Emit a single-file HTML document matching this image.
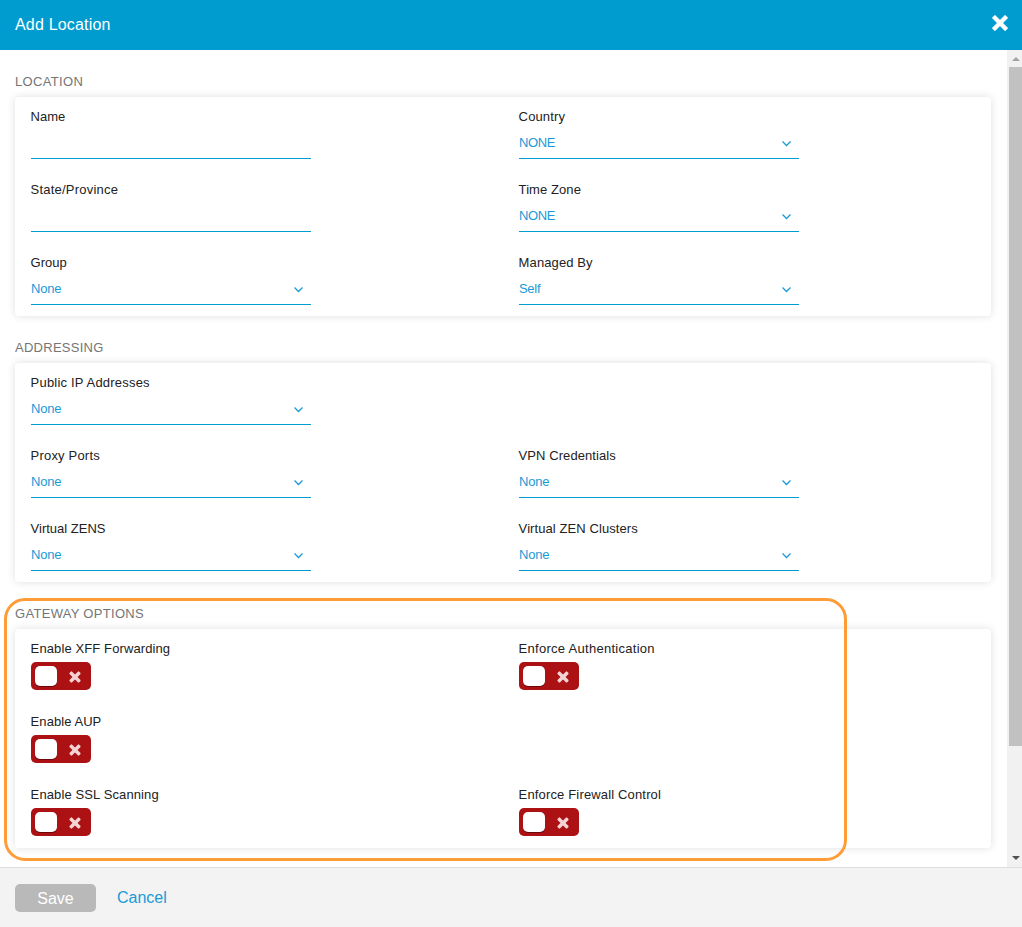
<!DOCTYPE html>
<html><head><meta charset="utf-8"><title>Add Location</title>
<style>
*{box-sizing:border-box;margin:0;padding:0}
html,body{width:1022px;height:927px;overflow:hidden;background:#fff;font-family:"Liberation Sans",Arial,sans-serif;font-size:13px;color:#222}
.hdr{position:absolute;left:0;top:0;width:1022px;height:50px;background:#009cd0;color:#fff}
.hdr .t{position:absolute;left:15px;top:16px;font-size:16px;line-height:18px;letter-spacing:.18px}
.hdr svg{position:absolute;left:990px;top:13.2px}
.body{position:absolute;left:0;top:50px;width:1007px;height:817px;background:#fff;overflow:hidden}
.sb{position:absolute;left:1007px;top:50px;width:15px;height:817px;background:#f1f1f1}
.sb .th{position:absolute;left:2px;top:17px;width:13px;height:679px;background:#c1c1c1}
.sb .up,.sb .dn{position:absolute;left:4.5px;width:0;height:0;border-left:4px solid transparent;border-right:4px solid transparent}
.sb .up{top:7px;border-bottom:4px solid #a3a3a3}
.sb .dn{bottom:7px;border-top:4px solid #505050}
.ftr{position:absolute;left:0;top:867px;width:1022px;height:60px;background:#f3f3f3;border-top:1px solid #dcdfe2}
.st{position:absolute;left:15px;font-size:13px;line-height:15px;color:#757575;white-space:nowrap}
.card{position:absolute;left:15px;width:976px;height:219px;background:#fff;border-radius:4px;box-shadow:0 0 8px rgba(0,0,0,.13)}
.f{position:absolute;width:280px}
.f .l{position:absolute;left:-.4px;top:0;font-size:13px;line-height:15px;color:#222;white-space:nowrap}
.f .v{position:absolute;left:0;top:26px;width:280px;height:24px;border-bottom:1px solid #009cd0;color:#1a9ad6;font-size:13px;line-height:15px}
.f .v svg{position:absolute;right:8.4px;top:5.6px}
.tg{position:absolute;left:0;top:21px;width:60px;height:28px;background:#ac1114;border-radius:5px}
.tg i{position:absolute;left:4px;top:4px;width:22px;height:20px;background:#fff;border-radius:5px;box-shadow:0 1px 0 rgba(60,0,0,.55)}
.tg svg{position:absolute;left:37px;top:8px}
.hl{position:absolute;left:4px;top:598px;width:843px;height:263px;border:3px solid #fe9c38;border-radius:21px}
.btn{position:absolute;left:15px;top:16px;width:81px;height:28px;background:#b9b9b9;color:#fff;border-radius:5px;font-size:16px;line-height:30px;text-align:center}
.cancel{position:absolute;left:117px;top:16px;font-size:16px;line-height:28px;color:#1a9ad6}
</style></head><body>
<div class="hdr"><div class="t">Add Location</div>
<svg width="20" height="20" viewBox="-10 -10 20 20"><g fill="#fff" transform="rotate(45)"><rect x="-9.4" y="-2.2" width="18.8" height="4.4" rx=".6"/><rect x="-2.2" y="-9.4" width="4.4" height="18.8" rx=".6"/></g></svg></div>
<div class="body">
<div class="st" style="top:24px;letter-spacing:.33px">LOCATION</div>
<div class="card" style="top:47px">
<div class="f" style="left:16px;top:12px"><div class="l">Name</div><div class="v"></div></div>
<div class="f" style="left:504px;top:12px"><div class="l" style="letter-spacing:0.13px">Country</div><div class="v" style="letter-spacing:-0.4px">NONE<svg width="9" height="6" viewBox="0 0 9 6"><path d="M.5 .5L4.5 4.5L8.5 .5" fill="none" stroke="#1a9ad6" stroke-width="1.25"/></svg></div></div>
<div class="f" style="left:16px;top:85px"><div class="l" style="letter-spacing:0.21px">State/Province</div><div class="v"></div></div>
<div class="f" style="left:504px;top:85px"><div class="l" style="letter-spacing:0.08px">Time Zone</div><div class="v" style="letter-spacing:-0.4px">NONE<svg width="9" height="6" viewBox="0 0 9 6"><path d="M.5 .5L4.5 4.5L8.5 .5" fill="none" stroke="#1a9ad6" stroke-width="1.25"/></svg></div></div>
<div class="f" style="left:16px;top:158px"><div class="l">Group</div><div class="v" style="letter-spacing:-0.2px">None<svg width="9" height="6" viewBox="0 0 9 6"><path d="M.5 .5L4.5 4.5L8.5 .5" fill="none" stroke="#1a9ad6" stroke-width="1.25"/></svg></div></div>
<div class="f" style="left:504px;top:158px"><div class="l" style="letter-spacing:0.11px">Managed By</div><div class="v" style="letter-spacing:-0.3px">Self<svg width="9" height="6" viewBox="0 0 9 6"><path d="M.5 .5L4.5 4.5L8.5 .5" fill="none" stroke="#1a9ad6" stroke-width="1.25"/></svg></div></div>
</div>
<div class="st" style="top:290px;letter-spacing:.26px">ADDRESSING</div>
<div class="card" style="top:313px">
<div class="f" style="left:16px;top:12px"><div class="l" style="letter-spacing:0.2px">Public IP Addresses</div><div class="v" style="letter-spacing:-0.2px">None<svg width="9" height="6" viewBox="0 0 9 6"><path d="M.5 .5L4.5 4.5L8.5 .5" fill="none" stroke="#1a9ad6" stroke-width="1.25"/></svg></div></div>
<div class="f" style="left:16px;top:85px"><div class="l" style="letter-spacing:0.19px">Proxy Ports</div><div class="v" style="letter-spacing:-0.2px">None<svg width="9" height="6" viewBox="0 0 9 6"><path d="M.5 .5L4.5 4.5L8.5 .5" fill="none" stroke="#1a9ad6" stroke-width="1.25"/></svg></div></div>
<div class="f" style="left:504px;top:85px"><div class="l" style="letter-spacing:0.07px">VPN Credentials</div><div class="v" style="letter-spacing:-0.2px">None<svg width="9" height="6" viewBox="0 0 9 6"><path d="M.5 .5L4.5 4.5L8.5 .5" fill="none" stroke="#1a9ad6" stroke-width="1.25"/></svg></div></div>
<div class="f" style="left:16px;top:158px"><div class="l">Virtual ZENS</div><div class="v" style="letter-spacing:-0.2px">None<svg width="9" height="6" viewBox="0 0 9 6"><path d="M.5 .5L4.5 4.5L8.5 .5" fill="none" stroke="#1a9ad6" stroke-width="1.25"/></svg></div></div>
<div class="f" style="left:504px;top:158px"><div class="l" style="letter-spacing:0.085px">Virtual ZEN Clusters</div><div class="v" style="letter-spacing:-0.2px">None<svg width="9" height="6" viewBox="0 0 9 6"><path d="M.5 .5L4.5 4.5L8.5 .5" fill="none" stroke="#1a9ad6" stroke-width="1.25"/></svg></div></div>
</div>
<div class="st" style="top:556px;letter-spacing:.3px">GATEWAY OPTIONS</div>
<div class="card" style="top:579px">
<div class="f" style="left:16px;top:12px"><div class="l" style="letter-spacing:0.11px">Enable XFF Forwarding</div><div class="tg"><i></i><svg width="14" height="14" viewBox="-7 -7 14 14"><g fill="#f3d3d4" transform="rotate(45)"><rect x="-6.75" y="-1.75" width="13.5" height="3.5" rx="1"/><rect x="-1.75" y="-6.75" width="3.5" height="13.5" rx="1"/></g></svg></div></div>
<div class="f" style="left:504px;top:12px"><div class="l" style="letter-spacing:0.28px">Enforce Authentication</div><div class="tg"><i></i><svg width="14" height="14" viewBox="-7 -7 14 14"><g fill="#f3d3d4" transform="rotate(45)"><rect x="-6.75" y="-1.75" width="13.5" height="3.5" rx="1"/><rect x="-1.75" y="-6.75" width="3.5" height="13.5" rx="1"/></g></svg></div></div>
<div class="f" style="left:16px;top:85px"><div class="l" style="letter-spacing:0.06px">Enable AUP</div><div class="tg"><i></i><svg width="14" height="14" viewBox="-7 -7 14 14"><g fill="#f3d3d4" transform="rotate(45)"><rect x="-6.75" y="-1.75" width="13.5" height="3.5" rx="1"/><rect x="-1.75" y="-6.75" width="3.5" height="13.5" rx="1"/></g></svg></div></div>
<div class="f" style="left:16px;top:158px"><div class="l" style="letter-spacing:0.115px">Enable SSL Scanning</div><div class="tg"><i></i><svg width="14" height="14" viewBox="-7 -7 14 14"><g fill="#f3d3d4" transform="rotate(45)"><rect x="-6.75" y="-1.75" width="13.5" height="3.5" rx="1"/><rect x="-1.75" y="-6.75" width="3.5" height="13.5" rx="1"/></g></svg></div></div>
<div class="f" style="left:504px;top:158px"><div class="l" style="letter-spacing:0.155px">Enforce Firewall Control</div><div class="tg"><i></i><svg width="14" height="14" viewBox="-7 -7 14 14"><g fill="#f3d3d4" transform="rotate(45)"><rect x="-6.75" y="-1.75" width="13.5" height="3.5" rx="1"/><rect x="-1.75" y="-6.75" width="3.5" height="13.5" rx="1"/></g></svg></div></div>
</div>
</div>
<div class="hl"></div>
<div class="sb"><div class="up"></div><div class="th"></div><div class="dn"></div></div>
<div class="ftr"><div class="btn">Save</div><div class="cancel">Cancel</div></div>
</body></html>
